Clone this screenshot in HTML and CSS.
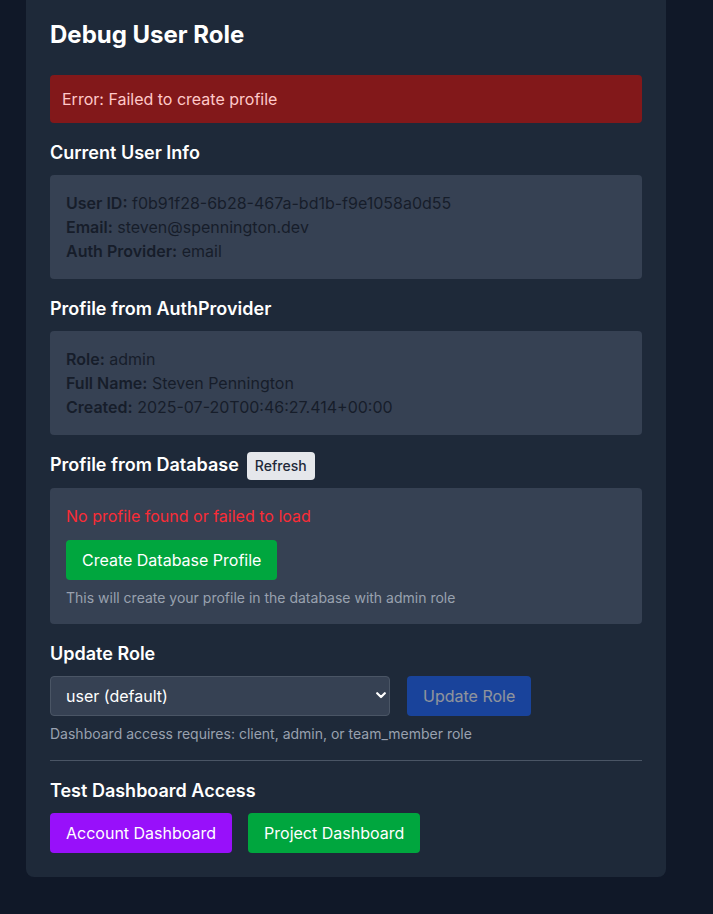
FILE: index.html
```html
<!DOCTYPE html>
<html lang="en">
<head>
<meta charset="utf-8">
<title>Debug User Role</title>
<link rel="stylesheet" href="styles.css">
</head>
<body>
<div class="page">
  <div class="card">
    <h1 class="title">Debug User Role</h1>
    <div class="error">Error: Failed to create profile</div>

    <section class="section">
      <h2 class="heading">Current User Info</h2>
      <div class="box">
        <p class="line"><strong>User ID:</strong> f0b91f28-6b28-467a-bd1b-f9e1058a0d55</p>
        <p class="line"><strong>Email:</strong> steven@spennington.dev</p>
        <p class="line"><strong>Auth Provider:</strong> email</p>
      </div>
    </section>

    <section class="section">
      <h2 class="heading">Profile from AuthProvider</h2>
      <div class="box">
        <p class="line"><strong>Role:</strong> admin</p>
        <p class="line"><strong>Full Name:</strong> Steven Pennington</p>
        <p class="line"><strong>Created:</strong> 2025-07-20T00:46:27.414+00:00</p>
      </div>
    </section>

    <section class="section">
      <div class="heading-row">
        <h2 class="heading">Profile from Database</h2>
        <button class="btn-refresh">Refresh</button>
      </div>
      <div class="box">
        <p class="missing">No profile found or failed to load</p>
        <button class="btn btn-green">Create Database Profile</button>
        <p class="hint">This will create your profile in the database with admin role</p>
      </div>
    </section>

    <section class="section">
      <h2 class="heading">Update Role</h2>
      <div class="role-row">
        <div class="select-wrap">
          <div class="select">user (default)</div>
          <svg class="chev" width="10" height="7" viewBox="0 0 10 7"><path d="M1.2 1.2 L5 5 L8.8 1.2" fill="none" stroke="#ffffff" stroke-width="2.2" stroke-linecap="round" stroke-linejoin="round"/></svg>
        </div>
        <button class="btn btn-blue" disabled>Update Role</button>
      </div>
      <p class="hint hint-small">Dashboard access requires: client, admin, or team_member role</p>
    </section>

    <section class="test">
      <h2 class="heading">Test Dashboard Access</h2>
      <div class="btn-row">
        <button class="btn btn-purple">Account Dashboard</button>
        <button class="btn btn-green">Project Dashboard</button>
      </div>
    </section>
  </div>
</div>
</body>
</html>
```

FILE: styles.css
```css
* { box-sizing: border-box; }
html, body {
  margin: 0;
  padding: 0;
  background: #101828;
  font-family: Inter, "Noto Sans", sans-serif;
  color: #101828;
}
.page {
  width: 713px;
  height: 914px;
  padding-left: 26px;
}
.card {
  width: 640px;
  background: #1e2939;
  border-radius: 0 0 8px 8px;
  padding: 19px 24px 24px;
}
.title {
  margin: 0 0 24px;
  font-size: 24px;
  line-height: 32px;
  font-weight: 700;
  color: #ffffff;
}
.error {
  background: #82181a;
  color: #ffc9c9;
  font-size: 16px;
  line-height: 24px;
  padding: 12px;
  border-radius: 4px;
  margin-bottom: 16px;
}
.section { margin-bottom: 16px; }
.heading {
  margin: 0 0 8px;
  font-size: 18px;
  line-height: 28px;
  font-weight: 600;
  color: #ffffff;
}
.heading-row {
  display: flex;
  align-items: flex-start;
  gap: 8px;
  height: 29px;
  margin-bottom: 8px;
}
.heading-row .heading { margin: 0; }
.btn-refresh {
  font-family: inherit;
  font-size: 14px;
  line-height: 20px;
  font-weight: 500;
  color: #1e2939;
  background: #e5e7eb;
  border: none;
  border-radius: 4px;
  padding: 4px 8px;
  margin-top: 1px;
}
.box {
  background: #364153;
  border-radius: 4px;
  padding: 16px;
}
.line {
  margin: 0;
  font-size: 16px;
  line-height: 24px;
  color: #161d2a;
}
.line strong { font-weight: 600; }
.missing {
  margin: 0 0 12px;
  font-size: 16px;
  line-height: 24px;
  color: #fb2c36;
}
.btn {
  display: block;
  font-family: inherit;
  font-size: 16px;
  line-height: 24px;
  font-weight: 400;
  color: #ffffff;
  border: none;
  border-radius: 4px;
  padding: 8px 16px;
}
.btn-green { background: #00a63e; }
.btn-purple { background: #9810fa; }
.btn-blue {
  background: #155dfc;
  opacity: 0.5;
}
.hint {
  margin: 8px 0 0;
  font-size: 14px;
  line-height: 20px;
  color: #99a1af;
}
.role-row {
  display: flex;
  gap: 17px;
}
.select-wrap {
  position: relative;
  width: 340px;
}
.select {
  height: 40px;
  background: #364153;
  border: 1px solid #4a5565;
  border-radius: 4px;
  color: #ffffff;
  font-size: 16px;
  line-height: 38px;
  padding-left: 15px;
}
.chev {
  position: absolute;
  right: 4px;
  top: 16px;
}
.test {
  border-top: 1px solid #4a5565;
  margin-top: 16px;
  padding-top: 16px;
}
.btn-row {
  display: flex;
  gap: 16px;
}
```
